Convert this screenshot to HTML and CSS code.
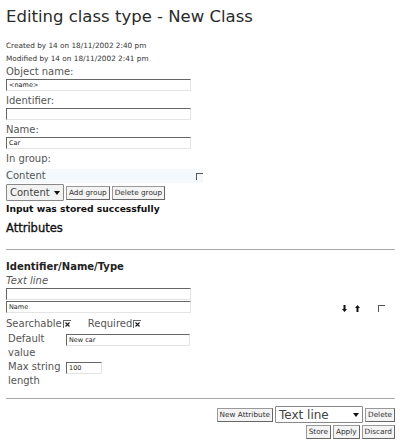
FILE: index.html
```html
<!DOCTYPE html>
<html>
<head>
<meta charset="utf-8">
<link rel="stylesheet" href="styles.css">
</head>
<body>
<h1 class="title">Editing class type - New Class</h1>
<div class="meta">Created by 14 on 18/11/2002 2:40 pm</div>
<div class="meta">Modified by 14 on 18/11/2002 2:41 pm</div>
<div class="label">Object name:</div>
<div class="input wide">&lt;name&gt;</div>
<div class="label">Identifier:</div>
<div class="input wide"></div>
<div class="label">Name:</div>
<div class="input wide">Car</div>
<div class="label">In group:</div>
<div class="group-row"><span class="label">Content</span><span class="cb"></span></div>
<div class="group-controls">
  <span class="select small-sel">Content<svg class="caret" viewBox="0 0 6 4" width="6" height="4"><path d="M0 0h6L3 4z"/></svg></span>
  <span class="btn">Add group</span>
  <span class="btn">Delete group</span>
</div>
<div class="feedback">Input was stored successfully</div>
<h2 class="section">Attributes</h2>
<div class="rule"></div>
<div class="attr">
  <div class="attr-main">
    <div class="attr-title">Identifier/Name/Type</div>
    <div class="attr-type">Text line</div>
    <div class="input wide tight"></div>
    <div class="input wide tight">Name</div>
    <div class="flags">
      <span class="label">Searchable</span><span class="xcb"><svg viewBox="0 0 7 7" width="7" height="7"><path d="M1.5 1.5L5.5 5.5M5.5 1.5L1.5 5.5" stroke="#222" stroke-width="1.2"/></svg></span>
      <span class="label req">Required</span><span class="xcb"><svg viewBox="0 0 7 7" width="7" height="7"><path d="M1.5 1.5L5.5 5.5M5.5 1.5L1.5 5.5" stroke="#222" stroke-width="1.2"/></svg></span>
    </div>
    <div class="field"><span class="label fl">Default value</span><span class="input dv">New car</span></div>
    <div class="field"><span class="label fl">Max string length</span><span class="input ml">100</span></div>
  </div>
  <div class="attr-ctrl">
    <svg class="arrow" viewBox="0 0 5 7" width="5" height="7"><path d="M1.5 0h2v4H5L2.5 7 0 4h1.5z"/></svg>
    <svg class="arrow" viewBox="0 0 5 7" width="5" height="7"><path d="M1.5 7h2V3H5L2.5 0 0 3h1.5z"/></svg>
    <span class="cb"></span>
  </div>
</div>
<div class="rule rule2"></div>
<div class="actions">
  <span class="btn">New Attribute</span>
  <span class="select big-sel">Text line<svg class="caret" viewBox="0 0 6 4" width="6" height="4"><path d="M0 0h6L3 4z"/></svg></span>
  <span class="btn">Delete</span>
</div>
<div class="actions">
  <span class="btn">Store</span>
  <span class="btn">Apply</span>
  <span class="btn">Discard</span>
</div>
</body>
</html>
```
FILE: styles.css
```css
body {
  margin: 0;
  padding: 7px 5px 0 6px;
  font-family: "DejaVu Sans", Verdana, sans-serif;
  color: #444;
  background: #fff;
}
.title {
  margin: 0 0 12px 0;
  font-size: 16.5px;
  font-weight: normal;
  color: #2a2a2a;
  line-height: 20px;
}
.meta {
  font-size: 7.3px;
  line-height: 13px;
  color: #333;
}
.label {
  font-size: 10px;
  line-height: 14px;
  color: #555;
}
.input {
  display: block;
  box-sizing: border-box;
  height: 12px;
  border-top: 1px solid #666;
  border-left: 1px solid #666;
  border-right: 1px solid #e4e4e4;
  border-bottom: 1px solid #e4e4e4;
  font-size: 6.5px;
  line-height: 10px;
  padding-left: 2px;
  color: #222;
  margin-bottom: 3px;
}
.wide { width: 185px; }
.tight { margin-bottom: 1px; }
.group-row {
  display: flex;
  justify-content: space-between;
  align-items: center;
  width: 197px;
  background: #f3f9fc;
  margin-top: 3px;
}
.cb {
  display: inline-block;
  width: 6px;
  height: 6px;
  border-top: 1px solid #555;
  border-left: 1px solid #555;
}
.group-controls {
  display: flex;
  align-items: center;
  gap: 2px;
  margin-top: 1px;
}
.select {
  display: inline-flex;
  align-items: center;
  justify-content: space-between;
  box-sizing: border-box;
  border: 1px solid #888;
  border-radius: 1px;
  background: #f2f2f2;
  color: #444;
  font-size: 10px;
  padding: 0 3px 0 3px;
}
.small-sel { width: 58px; height: 17px; }
.big-sel { width: 88px; height: 17px; background: #fff; font-size: 12px; }
.caret { fill: #111; }
.btn {
  display: inline-block;
  box-sizing: border-box;
  border: 1px solid #999;
  border-right-color: #666;
  border-bottom-color: #666;
  background: #f4f4f4;
  font-size: 7.3px;
  line-height: 12px;
  height: 14px;
  padding: 0 2px;
  color: #333;
}
.feedback {
  font-size: 9.2px;
  font-weight: bold;
  color: #111;
  line-height: 13px;
  margin-top: 1px;
}
.section {
  font-size: 11.5px;
  font-weight: normal;
  -webkit-text-stroke: 0.35px #111;
  color: #111;
  margin: 5px 0 0 0;
  line-height: 16px;
}
.rule {
  height: 1px;
  background: #aaa;
  margin-top: 13px;
}
.attr {
  display: flex;
  justify-content: space-between;
  padding-top: 9px;
}
.attr-title {
  font-size: 10px;
  font-weight: bold;
  color: #222;
  line-height: 15px;
}
.attr-type {
  font-size: 10px;
  font-style: italic;
  color: #555;
  line-height: 14px;
  margin-bottom: 0;
}
.flags {
  display: flex;
  align-items: center;
  margin-top: 4px;
  margin-bottom: 1px;
}
.xcb {
  display: inline-flex;
  width: 7px;
  height: 7px;
  border-top: 1px solid #666;
  border-left: 1px solid #666;
  margin-left: 1px;
}
.req { margin-left: 17px; }
.field {
  display: flex;
  align-items: flex-start;
}
.fl {
  width: 56px;
  padding-left: 2px;
  margin-right: 2px;
  line-height: 14px;
}
.dv { width: 124px; margin-top: 2px; }
.ml { width: 36px; margin-top: 2px; }
.attr-ctrl {
  display: flex;
  align-items: center;
  gap: 8px;
  padding-top: 46px;
  padding-right: 10px;
  align-self: flex-start;
}
.arrow { fill: #111; }
.attr-ctrl .cb { margin-left: 10px; }
.rule2 { margin-top: 10px; }
.actions {
  display: flex;
  justify-content: flex-end;
  align-items: center;
  gap: 2px;
  margin-top: 3px;
}
.actions + .actions { margin-top: 2px; }
.rule2 + .actions { margin-top: 7px; }
```
